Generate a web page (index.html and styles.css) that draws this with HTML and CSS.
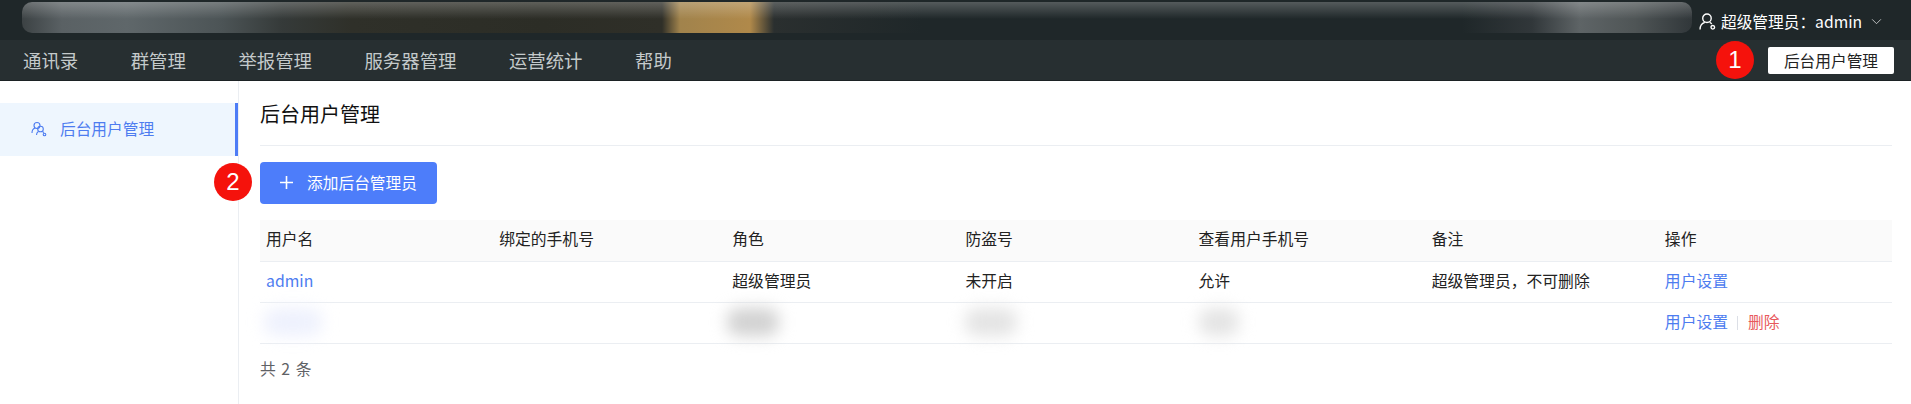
FILE: index.html
```html
<!DOCTYPE html>
<html lang="zh-CN">

<head>
    <meta charset="UTF-8">
    <title>后台用户管理</title>
    <link rel="stylesheet" href="styles.css">
</head>

<body>

    <!-- top bar -->
    <div class="top-bar">
        <div class="top-blur"></div>
        <div class="user-info">
            <svg class="user-icon" viewBox="0 0 16 16" fill="none" stroke="currentColor" stroke-width="1.3">
                <circle cx="7.500" cy="5" r="4"/>
                <path d="M1 15.500c0-3.500 2-5.800 4.500-6.600M10 8.900c.8.300 1.500.8 2 1.400"/>
                <circle cx="13" cy="13.500" r="1.700"/>
            </svg>
            <span>超级管理员：admin</span>
            <svg class="chevron" viewBox="0 0 12 8" fill="none" stroke="currentColor" stroke-width="1">
                <path d="M1 1.500l5 5 5-5"/>
            </svg>
        </div>
    </div>

    <!-- nav -->
    <div class="nav-bar">
        <ul class="nav-list">
            <li>通讯录</li>
            <li>群管理</li>
            <li>举报管理</li>
            <li>服务器管理</li>
            <li>运营统计</li>
            <li>帮助</li>
        </ul>
        <div class="nav-right">
            <span class="badge">1</span>
            <button class="nav-btn">后台用户管理</button>
        </div>
    </div>

    <div class="main">
        <!-- sidebar -->
        <div class="sidebar">
            <div class="side-item">
                <svg class="side-icon" viewBox="0 0 16 16" fill="none" stroke="currentColor" stroke-width="1.1">
                    <circle cx="6" cy="4.500" r="3"/>
                    <path d="M1 12c0-2.500 1.200-4.200 3-4.900"/>
                    <circle cx="9.500" cy="8" r="2.800"/>
                    <path d="M5.500 14c0-1.500.6-2.700 1.800-3.500M11.500 10.500c.5.300.9.700 1.200 1.200"/>
                    <circle cx="13.500" cy="13.500" r="1.300"/>
                </svg>
                <span>后台用户管理</span>
            </div>
        </div>

        <!-- content -->
        <div class="content">
            <h2 class="page-title">后台用户管理</h2>
            <div class="toolbar">
                <span class="badge badge-left">2</span>
                <button class="add-btn">
                    <svg class="plus" viewBox="0 0 13 13" fill="none" stroke="currentColor" stroke-width="1.6">
                        <path d="M6.500 0v13M0 6.500h13"/>
                    </svg>
                    添加后台管理员
                </button>
            </div>

            <table class="user-table">
                <thead>
                    <tr>
                        <th>用户名</th>
                        <th>绑定的手机号</th>
                        <th>角色</th>
                        <th>防盗号</th>
                        <th>查看用户手机号</th>
                        <th>备注</th>
                        <th>操作</th>
                    </tr>
                </thead>
                <tbody>
                    <tr>
                        <td><a class="link">admin</a></td>
                        <td></td>
                        <td>超级管理员</td>
                        <td>未开启</td>
                        <td>允许</td>
                        <td>超级管理员，不可删除</td>
                        <td><a class="link">用户设置</a></td>
                    </tr>
                    <tr>
                        <td><div class="smudge smudge-blue"></div></td>
                        <td></td>
                        <td><div class="smudge smudge-dark"></div></td>
                        <td><div class="smudge"></div></td>
                        <td><div class="smudge smudge-small"></div></td>
                        <td></td>
                        <td>
                            <a class="link">用户设置</a><span class="sep"></span><a class="link-del">删除</a>
                        </td>
                    </tr>
                </tbody>
            </table>

            <div class="total">共 2 条</div>
        </div>
    </div>

</body>

</html>
```

FILE: styles.css
```css
* {
    margin: 0;
    padding: 0;
    box-sizing: border-box;
}

html,
body {
    height: 100%;
    overflow: hidden;
}

body {
    font-family: "Noto Sans CJK SC", "Liberation Sans", sans-serif;
    font-size: 16px;
    color: #222;
    background: white;
    display: flex;
    flex-direction: column;
}

/* Top bar */
.top-bar {
    height: 40px;
    background: #1f2729;
    padding: 2px 0 0 22px;
    display: flex;
    color: white;
    flex-shrink: 0;
}

.top-blur {
    width: 1670px;
    height: 31px;
    border-radius: 10px;
    background:
        linear-gradient(to bottom, rgba(255, 255, 255, 0.24), rgba(255, 255, 255, 0) 55%),
        linear-gradient(to right,
            #3c4244 0,
            #5a6164 40px,
            #5f676a 105px,
            #4c5456 200px,
            #353a39 260px,
            #2f3029 330px,
            #2c2d26 520px,
            #2f2f28 640px,
            #a1834c 658px,
            #b0894a 728px,
            #2a2f2f 752px,
            #1f2729 900px,
            #1f2729 1440px,
            #31373a 1510px,
            #5e6466 1558px,
            #4f5556 1613px,
            #31373a 1670px);
}

.user-info {
    margin-left: 7px;
    height: 38px;
    display: flex;
    align-items: center;
    font-size: 15.700px;
    white-space: nowrap;
}

.user-icon {
    width: 17px;
    height: 17px;
    margin-right: 5px;
}

.chevron {
    width: 11px;
    height: 7px;
    margin-left: 9px;
    opacity: 0.8;
}

/* Nav */
.nav-bar {
    height: 41px;
    background: #272f31;
    border-bottom: 1px solid #1c2224;
    display: flex;
    align-items: center;
    justify-content: space-between;
    padding: 0 17px 0 23px;
    flex-shrink: 0;
}

.nav-list {
    list-style: none;
    display: flex;
    gap: 52.500px;
    font-size: 18.400px;
    color: #c4cacb;
}

.nav-right {
    display: flex;
    align-items: center;
    gap: 14px;
}

.badge {
    width: 38px;
    height: 38px;
    border-radius: 50%;
    background: #f5120c;
    color: white;
    font-family: "Liberation Sans", sans-serif;
    font-size: 24px;
    display: flex;
    align-items: center;
    justify-content: center;
    flex-shrink: 0;
}

.nav-btn {
    width: 126px;
    height: 27px;
    background: white;
    border: none;
    border-radius: 2px;
    font-family: inherit;
    font-size: 15.700px;
    color: #222;
}

/* Main */
.main {
    flex: 1;
    display: flex;
    min-height: 0;
}

.sidebar {
    width: 239px;
    border-right: 1px solid #ebeef2;
    padding-top: 22px;
    flex-shrink: 0;
}

.side-item {
    height: 53px;
    width: 238px;
    background: #eef6fe;
    border-right: 3px solid #4d7cf6;
    color: #4d7cf0;
    display: flex;
    align-items: center;
    padding: 0 0 2px 31px;
    font-size: 15.700px;
}

.side-icon {
    width: 16px;
    height: 16px;
    margin-right: 13px;
}

.content {
    flex: 1;
    padding: 0 19px 0 21px;
}

.page-title {
    font-size: 20px;
    font-weight: normal;
    color: #111;
    height: 65px;
    line-height: 66px;
    border-bottom: 1px solid #ebeef2;
}

.toolbar {
    position: relative;
    margin-top: 16px;
    height: 42px;
}

.badge-left {
    position: absolute;
    left: -46px;
    top: 1px;
}

.add-btn {
    width: 177px;
    height: 42px;
    background: #4d7dfa;
    color: white;
    border: none;
    border-radius: 4px;
    font-family: inherit;
    font-size: 15.700px;
    display: flex;
    align-items: center;
    justify-content: center;
    padding-bottom: 1px;
}

.plus {
    width: 13px;
    height: 13px;
    margin-right: 14px;
}

/* Table */
.user-table {
    width: 100%;
    border-collapse: collapse;
    table-layout: fixed;
    margin-top: 16px;
    font-size: 15.800px;
}

.user-table th {
    height: 41px;
    background: #fafafa;
    font-weight: normal;
    text-align: left;
    padding: 0 6px 4px;
    border-bottom: 1px solid #ebeef2;
}

.user-table td {
    height: 41px;
    padding: 0 6px 2px;
    border-bottom: 1px solid #ebeef2;
}

.link {
    color: #4d7cf0;
}

.link-del {
    color: #e8585c;
}

.sep {
    display: inline-block;
    width: 1px;
    height: 14px;
    background: #dcdfe6;
    margin: 0 10px 0 9px;
    vertical-align: -2px;
}

.smudge {
    width: 52px;
    height: 28px;
    background: #e4e4e4;
    border-radius: 12px;
    filter: blur(8px);
}

.smudge-dark {
    background: #d2d2d2;
    margin-left: -5px;
}

.smudge-small {
    width: 40px;
}

.smudge-blue {
    width: 58px;
    background: #eef1fd;
    margin-left: -2px;
}

.total {
    margin-top: 13px;
    font-size: 15.800px;
    word-spacing: 2px;
    color: #5f6266;
}
```
